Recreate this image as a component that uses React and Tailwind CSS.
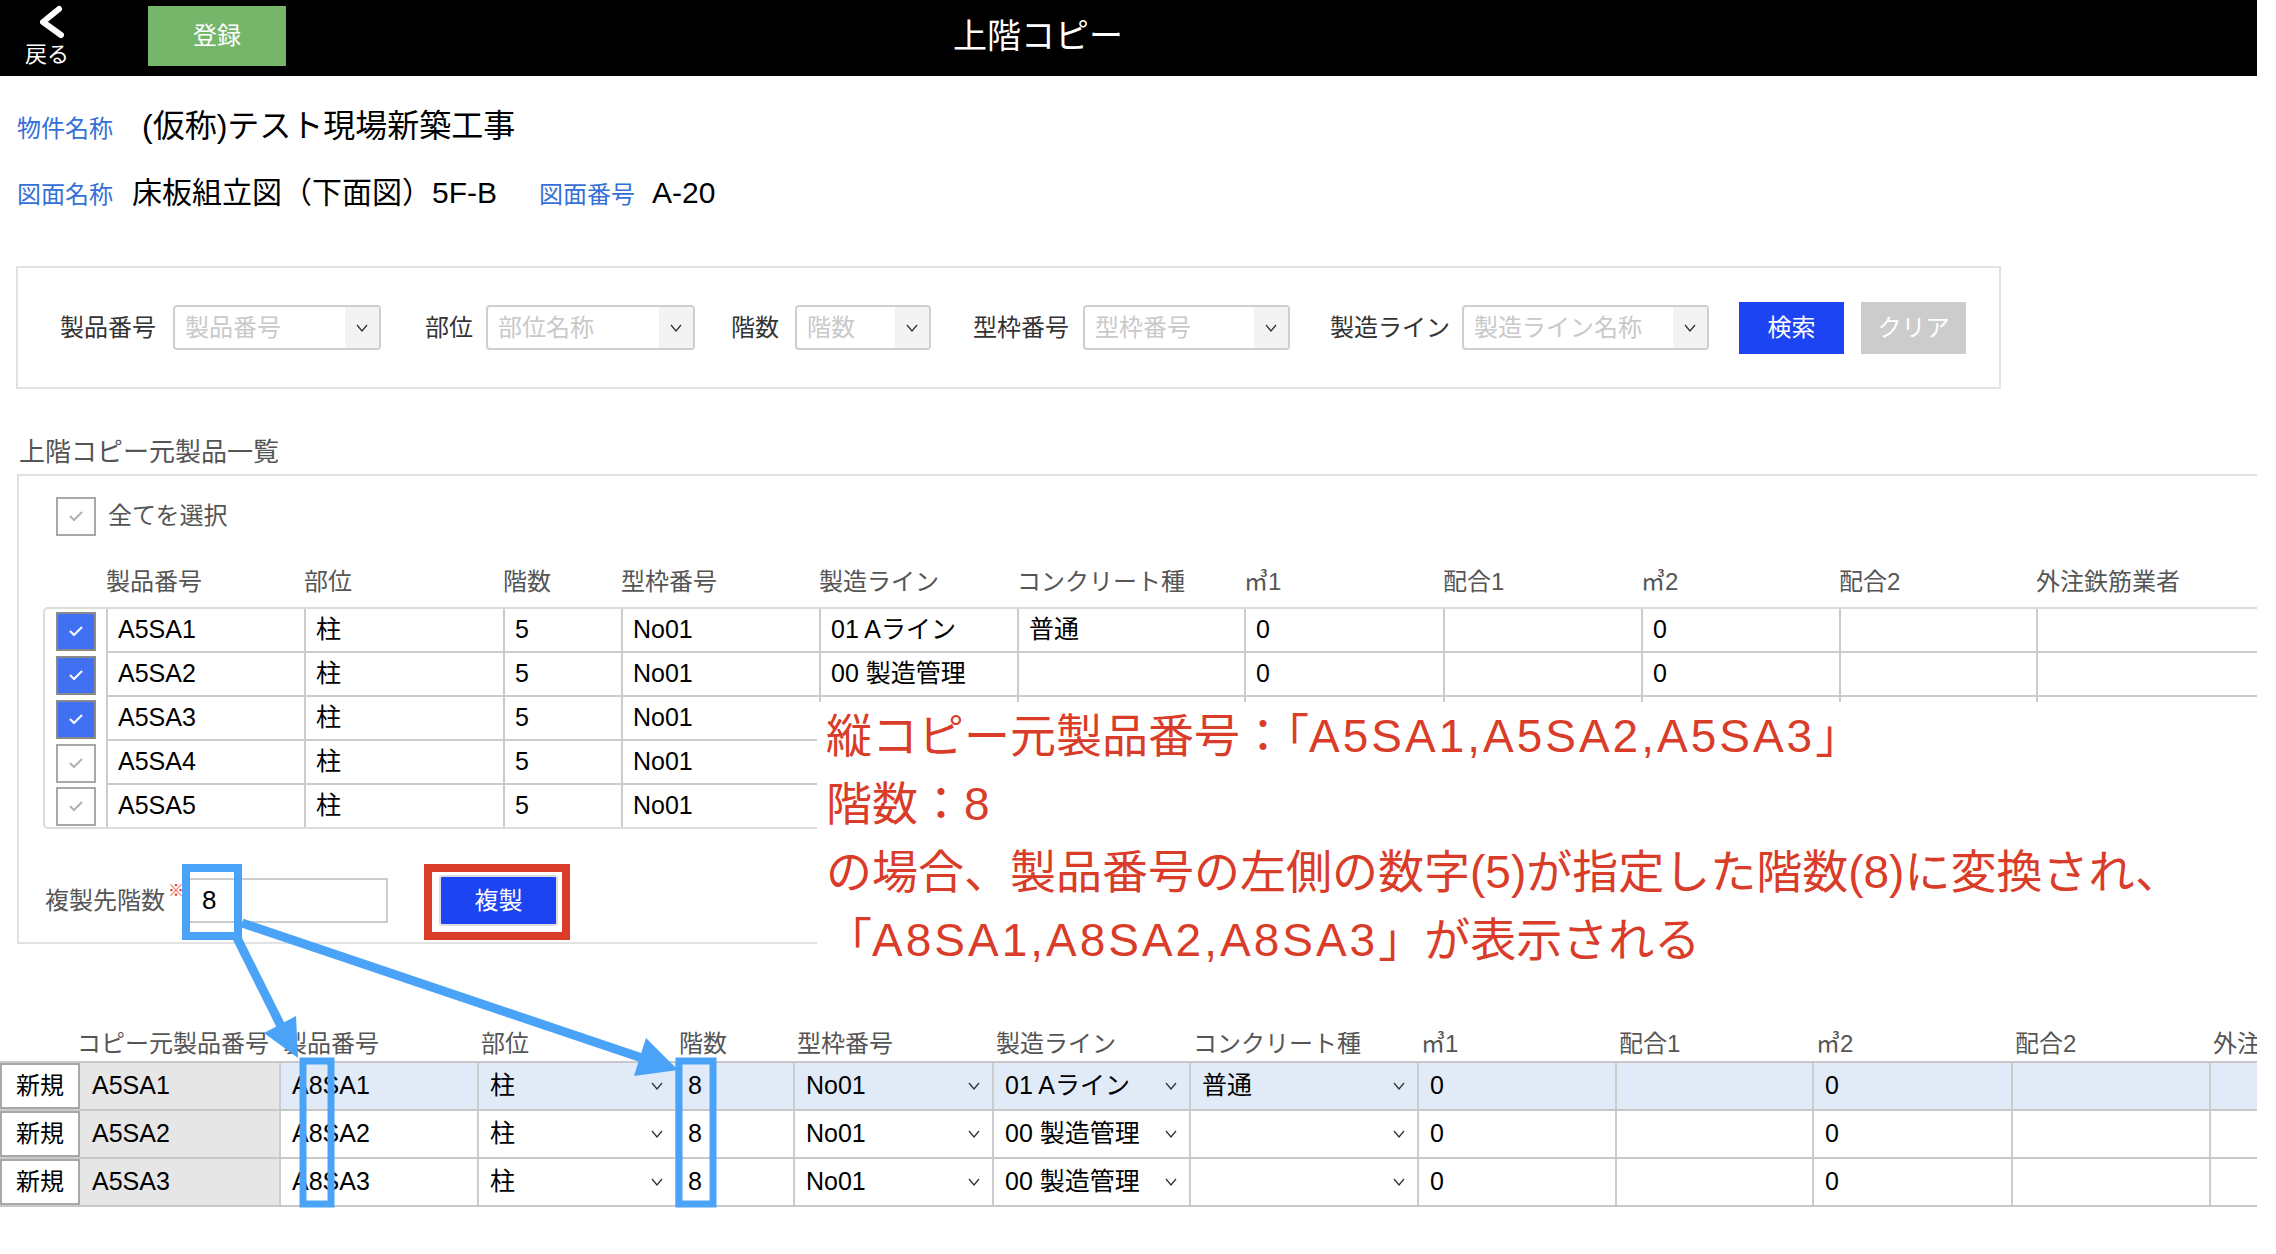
import React from "react";

const upCols = [
  { k: "製品番号", w: "w-[198px]" },
  { k: "部位", w: "w-[199px]" },
  { k: "階数", w: "w-[118px]" },
  { k: "型枠番号", w: "w-[198px]" },
  { k: "製造ライン", w: "w-[198px]" },
  { k: "コンクリート種", w: "w-[227px]" },
  { k: "㎥1", w: "w-[199px]" },
  { k: "配合1", w: "w-[198px]" },
  { k: "㎥2", w: "w-[198px]" },
  { k: "配合2", w: "w-[197px]" },
  { k: "外注鉄筋業者", w: "w-[264px]" },
];

const upRows = [
  { checked: true, v: ["A5SA1", "柱", "5", "No01", "01 Aライン", "普通", "0", "", "0", "", ""] },
  { checked: true, v: ["A5SA2", "柱", "5", "No01", "00 製造管理", "", "0", "", "0", "", ""] },
  { checked: true, v: ["A5SA3", "柱", "5", "No01", "", "", "", "", "", "", ""] },
  { checked: false, v: ["A5SA4", "柱", "5", "No01", "", "", "", "", "", "", ""] },
  { checked: false, v: ["A5SA5", "柱", "5", "No01", "", "", "", "", "", "", ""] },
];

const lowCols = [
  { k: "製品番号", w: "w-[198px]" },
  { k: "部位", w: "w-[198px]", dd: true },
  { k: "階数", w: "w-[118px]" },
  { k: "型枠番号", w: "w-[199px]", dd: true },
  { k: "製造ライン", w: "w-[197px]", dd: true },
  { k: "コンクリート種", w: "w-[228px]", dd: true },
  { k: "㎥1", w: "w-[198px]" },
  { k: "配合1", w: "w-[197px]" },
  { k: "㎥2", w: "w-[199px]" },
  { k: "配合2", w: "w-[198px]" },
  { k: "外注鉄筋業者", w: "w-[200px]" },
];

const lowRows = [
  { src: "A5SA1", hl: true, v: ["A8SA1", "柱", "8", "No01", "01 Aライン", "普通", "0", "", "0", "", ""] },
  { src: "A5SA2", v: ["A8SA2", "柱", "8", "No01", "00 製造管理", "", "0", "", "0", "", ""] },
  { src: "A5SA3", v: ["A8SA3", "柱", "8", "No01", "00 製造管理", "", "0", "", "0", "", ""] },
];

const Chevron = () => (
  <svg width="12" height="8" viewBox="0 0 12 8" className="shrink-0">
    <polyline points="1,1 6,7 11,1" fill="none" stroke="#333" strokeWidth="1.3" />
  </svg>
);

const Check = ({ color }) => (
  <svg width="16" height="12" viewBox="0 0 16 12">
    <polyline points="2,6 6,10 14,2" fill="none" stroke={color} strokeWidth="2" />
  </svg>
);

const Checkbox = ({ checked }) =>
  checked ? (
    <div className="flex h-[39px] w-[40px] items-center justify-center border-2 border-[#8a8a8a] bg-[#4170f3]">
      <Check color="#ffffff" />
    </div>
  ) : (
    <div className="flex h-[39px] w-[40px] items-center justify-center border-2 border-[#a8a8a8] bg-white">
      <Check color="#b0b0b0" />
    </div>
  );

const Select = ({ w, ph }) => (
  <div className={`flex h-[45px] ${w} overflow-hidden rounded-[4px] border-2 border-[#cfcfcf] bg-white`}>
    <div className="flex flex-1 items-center pl-[10px] text-[24px] text-[#c9c9c9]">{ph}</div>
    <div className="flex w-[34px] items-center justify-center bg-[#f3f3f3]">
      <Chevron />
    </div>
  </div>
);

export default function App() {
  return (
    <div className="relative h-[1254px] w-[2257px] overflow-hidden bg-white font-['Liberation_Sans','Noto_Sans_CJK_JP',sans-serif] text-black">
      {/* header */}
      <div className="flex h-[76px] bg-black">
        <div className="w-[148px] shrink-0 pt-[5px]">
          <svg className="ml-[38px] block" width="26" height="34" viewBox="0 0 26 34">
            <polyline points="21,4 5,17 23,30" fill="none" stroke="white" strokeWidth="6" strokeLinecap="round" strokeLinejoin="round" />
          </svg>
          <div className="ml-[25px] mt-[3px] text-[22px] leading-[26px] text-white">戻る</div>
        </div>
        <button className="mt-[6px] h-[60px] w-[138px] bg-[#76b66b] text-[24px] text-white">登録</button>
        <div className="ml-[667px] text-[34px] leading-[72px] text-white">上階コピー</div>
      </div>

      {/* info */}
      <div className="pl-[17px] pt-[30px]">
        <div className="flex items-baseline leading-[40px]">
          <span className="w-[125px] text-[24px] text-[#3470d8]">物件名称</span>
          <span className="text-[32px]">(仮称)テスト現場新築工事</span>
        </div>
        <div className="mt-[24px] flex items-baseline leading-[40px]">
          <span className="w-[115px] text-[24px] text-[#3470d8]">図面名称</span>
          <span className="text-[30px]">床板組立図（下面図）5F-B</span>
          <span className="ml-[42px] text-[24px] text-[#3470d8]">図面番号</span>
          <span className="ml-[17px] text-[30px]">A-20</span>
        </div>
      </div>

      {/* filter */}
      <div className="ml-[16px] mt-[51px] flex h-[123px] w-[1985px] items-center border-2 border-[#e2e2e2] pl-[42px] text-[24px] text-[#333]">
        <span>製品番号</span>
        <div className="ml-[17px]"><Select w="w-[208px]" ph="製品番号" /></div>
        <span className="ml-[44px]">部位</span>
        <div className="ml-[13px]"><Select w="w-[209px]" ph="部位名称" /></div>
        <span className="ml-[36px]">階数</span>
        <div className="ml-[16px]"><Select w="w-[136px]" ph="階数" /></div>
        <span className="ml-[42px]">型枠番号</span>
        <div className="ml-[14px]"><Select w="w-[207px]" ph="型枠番号" /></div>
        <span className="ml-[40px]">製造ライン</span>
        <div className="ml-[12px]"><Select w="w-[247px]" ph="製造ライン名称" /></div>
        <button className="ml-[30px] h-[52px] w-[105px] bg-[#1c44f2] text-white">検索</button>
        <button className="ml-[17px] h-[52px] w-[105px] bg-[#cccccc] text-white">クリア</button>
      </div>

      {/* source list */}
      <div className="ml-[19px] mt-[47px] text-[26px] leading-[32px] text-[#555]">上階コピー元製品一覧</div>
      <div className="ml-[17px] mt-[6px] w-[2240px] overflow-hidden border-y-2 border-l-2 border-[#e2e2e2] pb-[16px]">
        <div className="ml-[37px] mt-[20px] flex h-[40px] items-center">
          <Checkbox checked={false} />
          <span className="ml-[12px] text-[24px] text-[#555]">全てを選択</span>
        </div>
        <div className="ml-[24px] mt-[31px] flex text-[24px] leading-[30px] text-[#555]">
          <div className="w-[63px] shrink-0" />
          {upCols.map((c) => (
            <div key={c.k} className={`${c.w} shrink-0`}>{c.k}</div>
          ))}
        </div>
        <div className="ml-[24px] mt-[10px] w-[2300px] rounded-[5px] border-2 border-[#dcdcdc] bg-white">
          {upRows.map((r, i) => (
            <div key={i} className={`flex ${i < 4 ? "h-[44px]" : "h-[42px]"}`}>
              <div className="flex w-[61px] shrink-0 items-center pl-[11px]">
                <Checkbox checked={r.checked} />
              </div>
              {upCols.map((c, j) => (
                <div
                  key={j}
                  className={`${c.w} flex shrink-0 items-center border-l-2 border-[#cccccc] pl-[10px] text-[25px] ${i < 4 ? "border-b-2" : ""}`}
                >
                  {r.v[j]}
                </div>
              ))}
            </div>
          ))}
        </div>
        <div className="mt-[46px] flex h-[51px] items-center">
          <span className="ml-[26px] text-[24px] text-[#555]">複製先階数</span>
          <span className="mb-[20px] ml-[3px] text-[16px] leading-none text-[#e8402c]">※</span>
          <div className="ml-[4px] flex h-[45px] w-[200px] items-center border-2 border-[#cccccc] pl-[12px] text-[26px]">8</div>
          <button className="ml-[51px] h-[51px] w-[119px] rounded-[3px] border-2 border-[#dddddd] bg-[#1c44f2] text-[24px] text-white">複製</button>
        </div>
      </div>

      {/* result table */}
      <div className="mt-[85px] flex text-[24px] leading-[30px] text-[#555]">
        <div className="w-[77px] shrink-0" />
        <div className="w-[202px] shrink-0">コピー元製品番号</div>
        {lowCols.map((c) => (
          <div key={c.k} className={`${c.w} shrink-0 pl-[4px]`}>{c.k}</div>
        ))}
      </div>
      <div className="mt-[2px] w-[2400px] border-t-2 border-[#c8c8c8]">
        {lowRows.map((r, i) => (
          <div key={i} className="flex h-[48px] border-b-2 border-[#c8c8c8]">
            <div className="flex w-[80px] shrink-0 items-center justify-center border-2 border-[#a8a8a8] bg-white text-[24px]">新規</div>
            <div className="flex w-[199px] shrink-0 items-center bg-[#e6e6e6] pl-[12px] text-[25px]">{r.src}</div>
            {lowCols.map((c, j) => (
              <div
                key={j}
                className={`${c.w} flex shrink-0 items-center justify-between border-l-2 border-[#cccccc] pl-[11px] pr-[12px] text-[25px] ${r.hl ? "bg-[#e1ebf7]" : "bg-white"}`}
              >
                <span>{r.v[j]}</span>
                {c.dd && <Chevron />}
              </div>
            ))}
          </div>
        ))}
      </div>

      {/* annotation */}
      <div className="absolute left-[817px] top-[702px] h-[272px] w-[1440px] bg-white pl-[9px] text-[46px] leading-[68px] text-[#d93c28]">
        <div className="whitespace-nowrap">
          縦コピー元製品番号：「<span className="tracking-[3px]">A5SA1,A5SA2,A5SA3</span>」
        </div>
        <div className="whitespace-nowrap">階数：8</div>
        <div className="whitespace-nowrap">の場合、製品番号の左側の数字(5)が指定した階数(8)に変換され、</div>
        <div className="whitespace-nowrap">
          「<span className="tracking-[3px]">A8SA1,A8SA2,A8SA3</span>」が表示される
        </div>
      </div>

      <svg className="pointer-events-none absolute left-0 top-0" width="2257" height="1254" viewBox="0 0 2257 1254">
        <rect x="186" y="868" width="52" height="68" fill="none" stroke="#4aa3f7" strokeWidth="8" />
        <rect x="428" y="868" width="138" height="68" fill="none" stroke="#d93c28" strokeWidth="8" />
        <rect x="303" y="1061" width="28" height="143" fill="none" stroke="#4aa3f7" strokeWidth="7" />
        <rect x="679" y="1061" width="34" height="143" fill="none" stroke="#4aa3f7" strokeWidth="7" />
        <line x1="236" y1="936" x2="281" y2="1026" stroke="#4aa3f7" strokeWidth="9" />
        <polygon points="298,1058 296,1016 264,1033" fill="#4aa3f7" />
        <line x1="242" y1="923" x2="642" y2="1058" stroke="#4aa3f7" strokeWidth="9" />
        <polygon points="678,1070 646,1038 634,1076" fill="#4aa3f7" />
      </svg>
    </div>
  );
}
